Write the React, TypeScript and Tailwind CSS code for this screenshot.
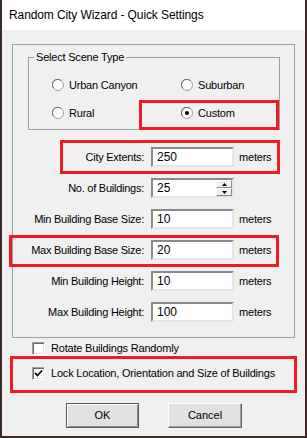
import React from "react";

const F = { fontFamily: '"Liberation Sans", Arial, sans-serif' };

function Radio({ checked, label }: { checked?: boolean; label: string }) {
  return (
    <div className="flex items-center h-[14px]">
      <svg width="12" height="12" viewBox="0 0 12 12" className="shrink-0">
        <circle cx="6" cy="6" r="5.5" fill="#ffffff" stroke="#a0a0a0" />
        <path d="M1.8 9.2 A5 5 0 0 1 9.2 1.8" fill="none" stroke="#6a6a6a" strokeWidth="1" />
        {checked && <circle cx="6" cy="6" r="2" fill="#000000" />}
      </svg>
      <span className="ml-[5px] text-[11px] tracking-[-0.2px] text-black leading-none">{label}</span>
    </div>
  );
}

function Field({
  label,
  value,
  unit,
  spinner,
  first,
}: {
  label: string;
  value: string;
  unit?: string;
  spinner?: boolean;
  first?: boolean;
}) {
  return (
    <div className={`flex items-center h-[20px] ${first ? "mt-[17px]" : "mt-[11px]"}`}>
      <div className="w-[131px] text-right text-[11px] tracking-[-0.25px] text-black leading-none">{label}</div>
      <div className="ml-[7px] w-[83px] h-[20px] flex bg-white border-2 border-t-[#8a8a8a] border-l-[#8a8a8a] border-b-[#e6e6e6] border-r-[#e6e6e6]">
        <div className="flex-1 flex items-center pl-[4px] text-[12px] text-black leading-none">{value}</div>
        {spinner && (
          <div className="w-[16px] flex flex-col">
            <div className="h-[8px] bg-[#f0f0f0] border border-t-white border-l-white border-b-[#8a8a8a] border-r-[#8a8a8a] flex items-center justify-center">
              <svg width="5" height="3" viewBox="0 0 5 3"><path d="M0 3 L2.5 0 L5 3 Z" fill="#000" /></svg>
            </div>
            <div className="h-[8px] bg-[#f0f0f0] border border-t-white border-l-white border-b-[#8a8a8a] border-r-[#8a8a8a] flex items-center justify-center">
              <svg width="5" height="3" viewBox="0 0 5 3"><path d="M0 0 L2.5 3 L5 0 Z" fill="#000" /></svg>
            </div>
          </div>
        )}
      </div>
      {unit && <div className="ml-[5px] text-[11px] tracking-[-0.2px] text-black leading-none">{unit}</div>}
    </div>
  );
}

function Check({ checked, label, cls }: { checked?: boolean; label: string; cls: string }) {
  return (
    <div className={`flex items-center h-[13px] ml-[30px] ${cls}`}>
      <div className="w-[13px] h-[13px] bg-white border border-t-[#a0a0a0] border-l-[#a0a0a0] border-b-white border-r-white shadow-[inset_1px_1px_0_#696969,inset_-1px_-1px_0_#e3e3e3] flex items-center justify-center">
        {checked && (
          <svg width="9" height="9" viewBox="0 0 9 9">
            <path d="M1 4 L3.5 6.5 L8 1.5" fill="none" stroke="#000" strokeWidth="1.8" />
          </svg>
        )}
      </div>
      <span className="ml-[6px] text-[11px] tracking-[-0.2px] text-black leading-none">{label}</span>
    </div>
  );
}

function RedBox({ cls }: { cls: string }) {
  return <div className={`absolute border-[3px] border-[#ed1c24] pointer-events-none ${cls}`} />;
}

export default function App() {
  return (
    <div className="relative w-[307px] h-[438px] bg-[#3a2a2a] overflow-hidden" style={F}>
      <div className="ml-[2px] w-[303px] h-[436px] flex flex-col">
        <div className="h-[30px] bg-white flex items-center pl-[7px] text-[12px] tracking-[-0.1px] text-black">
          Random City Wizard - Quick Settings
        </div>
        <div className="flex-1 bg-[#f0f0f0] flex flex-col">
          <div className="ml-[10px] mt-[14px] w-[283px] h-[294px] border border-[#a0a0a0] flex flex-col">
            <div className="relative ml-[15px] mt-[12px] w-[252px] h-[73px] border border-[#a0a0a0]">
              <div className="absolute left-[5px] top-[-8px] px-[2px] bg-[#f0f0f0] text-[11px] tracking-[-0.2px] text-black leading-[14px]">
                Select Scene Type
              </div>
              <div className="grid grid-cols-[129px_1fr] gap-y-[14px] pt-[20px] pl-[23px]">
                <Radio label="Urban Canyon" />
                <Radio label="Suburban" />
                <Radio label="Rural" />
                <Radio label="Custom" checked />
              </div>
            </div>
            <Field label="City Extents:" value="250" unit="meters" first />
            <Field label="No. of Buildings:" value="25" spinner />
            <Field label="Min Building Base Size:" value="10" unit="meters" />
            <Field label="Max Building Base Size:" value="20" unit="meters" />
            <Field label="Min Building Height:" value="10" unit="meters" />
            <Field label="Max Building Height:" value="100" unit="meters" />
          </div>
          <Check label="Rotate Buildings Randomly" cls="mt-[4px]" />
          <Check label="Lock Location, Orientation and Size of Buildings" checked cls="mt-[12px]" />
          <div className="flex mt-[23px] ml-[64px] gap-[29px]">
            <button className="w-[73px] h-[25px] bg-[#e1e1e1] border border-[#5a5a5a] shadow-[inset_1px_1px_0_#ffffff,inset_-1px_-1px_0_#8a8a8a] text-[11px] text-black">
              OK
            </button>
            <button className="w-[74px] h-[25px] bg-[#e1e1e1] border border-t-white border-l-white border-b-[#696969] border-r-[#696969] shadow-[inset_-1px_-1px_0_#a0a0a0] text-[11px] text-black">
              Cancel
            </button>
          </div>
        </div>
      </div>
      <RedBox cls="left-[139px] top-[100px] w-[140px] h-[30px]" />
      <RedBox cls="left-[60px] top-[140px] w-[220px] h-[34px]" />
      <RedBox cls="left-[9px] top-[235px] w-[270px] h-[32px]" />
      <RedBox cls="left-[10px] top-[356px] w-[287px] h-[37px]" />
    </div>
  );
}
